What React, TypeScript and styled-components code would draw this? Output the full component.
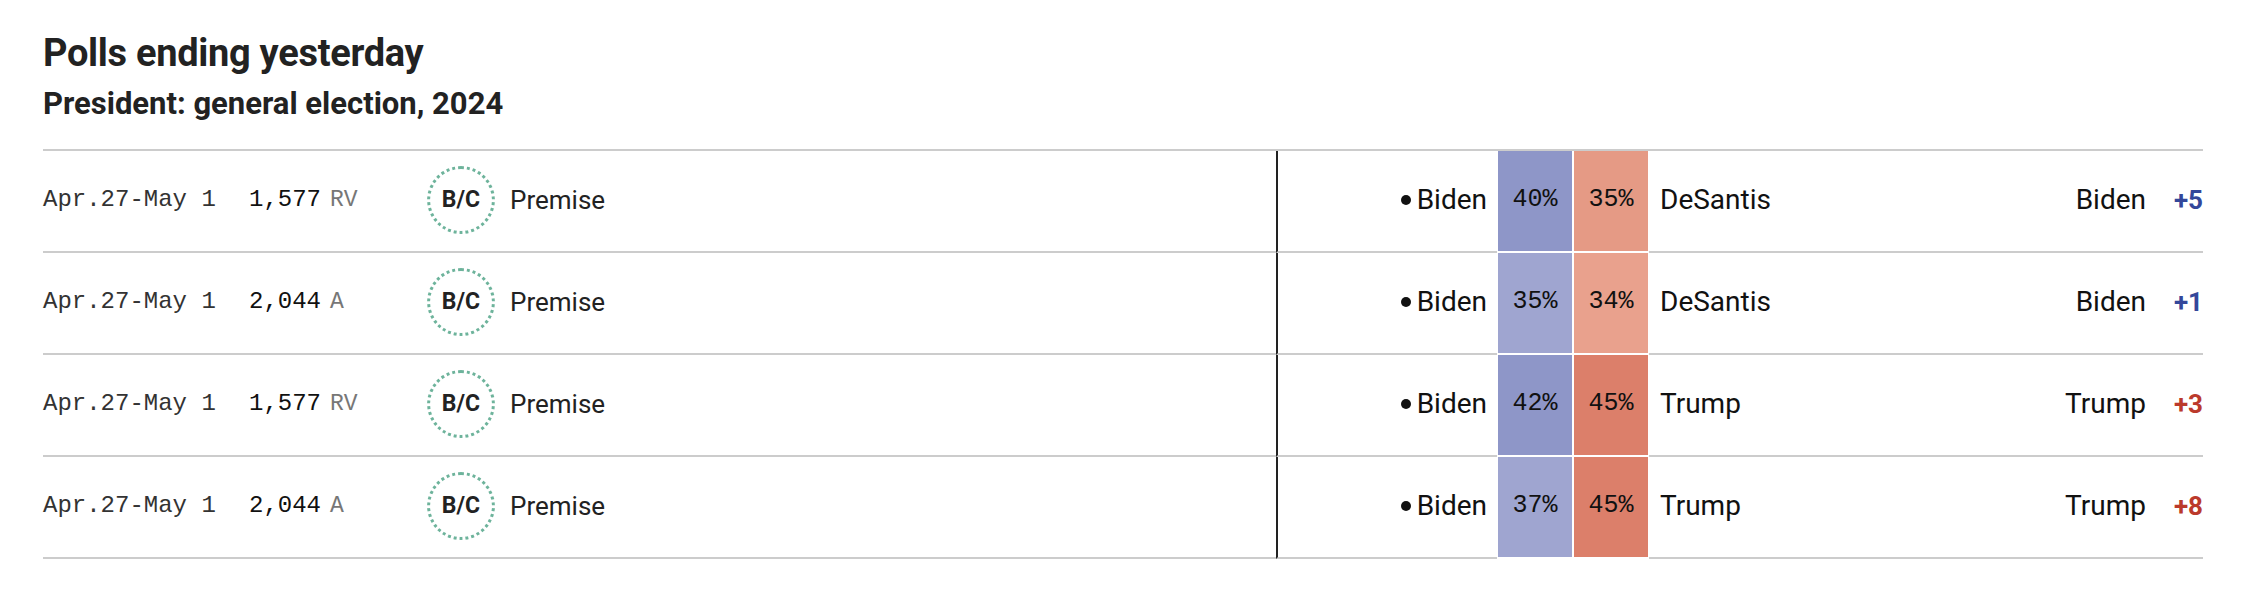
import React from "react"
import styled, { createGlobalStyle } from "styled-components"

const GlobalStyle = createGlobalStyle`
    body {
        margin: 0;
        background: #fff;
        font-family: Roboto, "Liberation Sans", sans-serif;
        color: #222;
    }
`

const Page = styled.div`
    padding: 30px 51px 0 43px;
`

const Title = styled.h2`
    margin: 0;
    font-size: 38px;
    line-height: 46px;
    font-weight: 700;
    letter-spacing: -0.3px;
    color: #222;
`

const Subtitle = styled.h3`
    margin: 11px 0 28px;
    font-size: 31px;
    line-height: 34px;
    font-weight: 700;
    letter-spacing: 0;
    color: #222;
`

const Table = styled.div`
    border-top: 2px solid #ccc;
`

const Row = styled.div`
    display: grid;
    grid-template-columns: 206px 178px 83px 766px 221px 76px 76px 1fr 200px 57px;
    height: 102px;
`

const Cell = styled.div<{ $align?: "left" | "right" }>`
    display: flex;
    align-items: center;
    justify-content: ${(p) => (p.$align === "right" ? "flex-end" : "flex-start")};
    padding-bottom: 3px;
    border-bottom: 2px solid #ccc;
    white-space: nowrap;
`

const Mono = styled.span`
    font-family: "Liberation Mono", "DejaVu Sans Mono", monospace;
    font-size: 24px;
    color: #333;
`

const Sample = styled(Mono)`
    font-size: 24px;
    color: #111;
`

const Population = styled(Mono)`
    font-size: 23px;
    color: #777;
    margin-left: 9px;
`

const Grade = styled.div`
    width: 62px;
    height: 62px;
    border-radius: 50%;
    border: 3px dotted #6db39b;
    display: flex;
    align-items: center;
    justify-content: center;
    font-size: 23px;
    font-weight: 700;
    color: #222;
`

const Pollster = styled.span`
    font-size: 26px;
    color: #222;
`

const CandidateA = styled(Cell)`
    border-left: 2px solid #222;
    padding-right: 10px;
`

const Dot = styled.span`
    width: 10px;
    height: 10px;
    border-radius: 50%;
    background: #111;
    margin-right: 6px;
`

const Name = styled.span`
    font-size: 28px;
    color: #111;
`

const Bar = styled.div<{ $color: string }>`
    display: flex;
    align-items: center;
    justify-content: center;
    padding-bottom: 3px;
    background: ${(p) => p.$color};
    background-clip: padding-box;
    border-left: 1px solid #fff;
    border-right: 1px solid #fff;
    border-bottom: 2px solid #fff;
    font-family: "Liberation Mono", "DejaVu Sans Mono", monospace;
    font-size: 25px;
    color: #111;
`

const CandidateB = styled(Cell)`
    padding-left: 11px;
`

const Net = styled.span<{ $party: "D" | "R" }>`
    font-size: 26px;
    font-weight: 700;
    color: ${(p) => (p.$party === "D" ? "#34479a" : "#bb3a2c")};
`

type Poll = {
    dates: string
    sample: string
    population: string
    grade: string
    pollster: string
    candA: string
    pctA: number
    colorA: string
    candB: string
    pctB: number
    colorB: string
    leader: string
    party: "D" | "R"
    net: number
}

const polls: Poll[] = [
    {
        dates: "Apr.27-May 1", sample: "1,577", population: "RV", grade: "B/C", pollster: "Premise",
        candA: "Biden", pctA: 40, colorA: "#8e96c8", candB: "DeSantis", pctB: 35, colorB: "#e59a85",
        leader: "Biden", party: "D", net: 5,
    },
    {
        dates: "Apr.27-May 1", sample: "2,044", population: "A", grade: "B/C", pollster: "Premise",
        candA: "Biden", pctA: 35, colorA: "#9fa5d0", candB: "DeSantis", pctB: 34, colorB: "#e9a18d",
        leader: "Biden", party: "D", net: 1,
    },
    {
        dates: "Apr.27-May 1", sample: "1,577", population: "RV", grade: "B/C", pollster: "Premise",
        candA: "Biden", pctA: 42, colorA: "#8e96c8", candB: "Trump", pctB: 45, colorB: "#dc7f6a",
        leader: "Trump", party: "R", net: 3,
    },
    {
        dates: "Apr.27-May 1", sample: "2,044", population: "A", grade: "B/C", pollster: "Premise",
        candA: "Biden", pctA: 37, colorA: "#9fa5d0", candB: "Trump", pctB: 45, colorB: "#dc7f6a",
        leader: "Trump", party: "R", net: 8,
    },
]

const App = () => (
    <Page>
        <GlobalStyle />
        <Title>Polls ending yesterday</Title>
        <Subtitle>President: general election, 2024</Subtitle>
        <Table>
            {polls.map((poll, i) => (
                <Row key={i}>
                    <Cell>
                        <Mono>{poll.dates}</Mono>
                    </Cell>
                    <Cell>
                        <Sample>{poll.sample}</Sample>
                        <Population>{poll.population}</Population>
                    </Cell>
                    <Cell>
                        <Grade>{poll.grade}</Grade>
                    </Cell>
                    <Cell>
                        <Pollster>{poll.pollster}</Pollster>
                    </Cell>
                    <CandidateA $align="right">
                        <Dot />
                        <Name>{poll.candA}</Name>
                    </CandidateA>
                    <Bar $color={poll.colorA}>{poll.pctA}%</Bar>
                    <Bar $color={poll.colorB}>{poll.pctB}%</Bar>
                    <CandidateB>
                        <Name>{poll.candB}</Name>
                    </CandidateB>
                    <Cell $align="right">
                        <Name>{poll.leader}</Name>
                    </Cell>
                    <Cell $align="right">
                        <Net $party={poll.party}>+{poll.net}</Net>
                    </Cell>
                </Row>
            ))}
        </Table>
    </Page>
)

export default App
